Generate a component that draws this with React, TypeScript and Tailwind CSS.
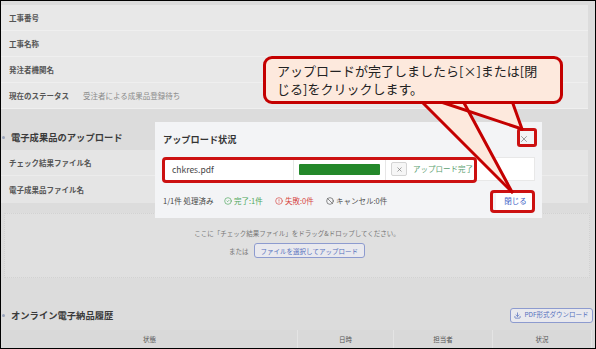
import { Ban, CircleAlert, CircleCheck, Download, X } from "lucide-react";

const infoRows = [
  { label: "工事番号", value: "" },
  { label: "工事名称", value: "" },
  { label: "発注者機関名", value: "" },
  { label: "現在のステータス", value: "受注者による成果品登録待ち" },
];

const columns = [
  { label: "状態", w: "w-[296px]" },
  { label: "日時", w: "w-[96px]" },
  { label: "担当者", w: "w-[99px]" },
  { label: "状況", w: "w-[99px]" },
];

const SectionTitle = ({ title }: { title: string }) => (
  <div className="flex items-center">
    <span className="ml-[1px] mr-[6px] h-[3px] w-[3px] rounded-full bg-[#9aa5bd]" />
    <span className="text-[9.3px] font-bold leading-[14px] text-[#3a3a3a]">{title}</span>
  </div>
);

export default function App() {
  return (
    <div className="relative h-[349px] w-[596px] overflow-hidden border border-black bg-[#dcdcdc] font-['Noto_Sans_CJK_JP','Noto_Sans',sans-serif] text-[#555]">
      {/* info rows */}
      <div className="mr-[7px] mt-[4px] bg-[#e8e8e8]">
        {infoRows.map((r) => (
          <div
            key={r.label}
            className="flex h-[26px] items-center border-b border-[#efefef] pl-[8px] text-[7.5px]"
          >
            <span className="w-[74px] font-bold">{r.label}</span>
            <span className="text-[#8a8a8a]">{r.value}</span>
          </div>
        ))}
      </div>

      {/* upload section */}
      <div className="flex h-[41px] items-end pb-[6px]">
        <SectionTitle title="電子成果品のアップロード" />
      </div>
      <div className="mr-[7px] bg-[#e5e5e5] text-[7.5px] font-bold">
        <div className="flex h-[26px] items-center border-b border-[#ececec] pl-[8px]">チェック結果ファイル名</div>
        <div className="flex h-[27px] items-center pl-[8px]">電子成果品ファイル名</div>
      </div>
      <div className="ml-[3px] mr-[5px] mt-[10px] flex h-[65px] flex-col items-center border border-dotted border-[#d2d2d2] bg-[#e0e0e0] pt-[14px] text-[6.5px] leading-[10px] text-[#777]">
        <p>ここに「チェック結果ファイル」をドラッグ&amp;ドロップしてください。</p>
        <div className="mt-[5px] flex items-center gap-[5px]">
          <span>または</span>
          <button className="h-[15px] rounded-[3px] border border-[#8d9bcf] bg-[#e9e9ee] px-[6px] text-[6.5px] text-[#5570bd]">
            ファイルを選択してアップロード
          </button>
        </div>
      </div>

      {/* history */}
      <div className="mr-[2px] mt-[27px] flex h-[20px] items-center justify-between">
        <SectionTitle title="オンライン電子納品履歴" />
        <button className="flex h-[15px] w-[83px] items-center justify-center gap-[3px] rounded-[3px] border border-[#8d9bcf] bg-[#e9e9ee] text-[6.5px] text-[#5570bd]">
          <Download size={7} strokeWidth={2.5} />
          PDF形式ダウンロード
        </button>
      </div>
      <div className="ml-[1px] mt-[5px] flex h-[19px] bg-[#d9d9d9] text-[6.5px] text-[#555]">
        {columns.map((c) => (
          <div key={c.label} className={`${c.w} flex items-center justify-center border-r border-[#e4e4e4]`}>
            {c.label}
          </div>
        ))}
      </div>

      {/* dialog */}
      <div className="absolute left-[154px] top-[121px] h-[96px] w-[387px] bg-[#f3f4f6] px-[7px] pl-[8px]">
        <div className="flex items-center justify-between pr-[6px] pt-[11px]">
          <span className="text-[9.2px] font-bold leading-[12px] text-[#333]">アップロード状況</span>
          <X size={10} strokeWidth={1.5} className="text-[#666]" />
        </div>
        <div className="mt-[12px] flex h-[24px] items-center border border-[#e8e8e8] bg-white">
          <div className="flex h-full w-[130px] items-center border-r border-[#e6e6e6] pl-[8px] text-[8.5px] text-[#444]">
            chkres.pdf
          </div>
          <div className="flex h-full w-[92px] items-center border-r border-[#e6e6e6] px-[5px]">
            <div className="h-[11px] w-full rounded-[1px] bg-[#23882a]" />
          </div>
          <div className="ml-[5px] flex h-[14px] w-[16px] items-center justify-center rounded-[2px] border border-[#d4d4d4] bg-[#f6f6f6] text-[#666]">
            <X size={7} strokeWidth={2} />
          </div>
          <span className="ml-[6px] text-[7.5px] text-[#5a9e6f]">アップロード完了</span>
        </div>
        <div className="mt-[9px] flex h-[22px] items-center justify-between text-[7.5px]">
          <div className="flex items-center">
            <span className="w-[61px] text-[#444]">1/1件 処理済み</span>
            <span className="flex w-[51px] items-center gap-[2px] text-[#4fa85c]">
              <CircleCheck size={8} strokeWidth={2} />
              完了:1件
            </span>
            <span className="flex w-[51px] items-center gap-[2px] text-[#d64541]">
              <CircleAlert size={8} strokeWidth={2} />
              失敗:0件
            </span>
            <span className="flex items-center gap-[2px] text-[#555]">
              <Ban size={8} strokeWidth={2} />
              キャンセル:0件
            </span>
          </div>
          <button className="flex h-[17px] w-[39px] items-center justify-center bg-white text-[7.5px] text-[#3a5ec5]">
            閉じる
          </button>
        </div>
      </div>

      {/* highlight boxes */}
      <div className="pointer-events-none absolute left-[516px] top-[127px] h-[19px] w-[20px] rounded-[3px] border-[3px] border-[#cc1111]" />
      <div className="pointer-events-none absolute left-[161px] top-[156px] h-[26px] w-[315px] rounded-[4px] border-[3px] border-[#cc1111]" />
      <div className="pointer-events-none absolute left-[489px] top-[189px] h-[23px] w-[45px] rounded-[4px] border-[3px] border-[#cc1111]" />

      {/* callout pointers */}
      <svg className="pointer-events-none absolute left-0 top-0" width="596" height="349">
        <polygon points="420,100 462,100 511,191" fill="#fde9dd" />
        <polygon points="437,100 511,100 521,128" fill="#fde9dd" />
        <g stroke="#c40000" strokeWidth="3" strokeLinecap="round">
          <line x1="420" y1="100" x2="511" y2="191" />
          <line x1="462" y1="100" x2="511" y2="191" />
          <line x1="437" y1="100" x2="521" y2="128" />
          <line x1="511" y1="100" x2="521" y2="128" />
        </g>
      </svg>

      {/* callout body */}
      <div className="absolute left-[262px] top-[55px] h-[48px] w-[300px] rounded-[9px] border-[3px] border-[#c40000] bg-[#fde9dd] pl-[11px] pt-[3px] text-[13px] leading-[18px] text-[#222]">
        <p>アップロードが完了しましたら[×]または[閉</p>
        <p>じる]をクリックします。</p>
      </div>
    </div>
  );
}
